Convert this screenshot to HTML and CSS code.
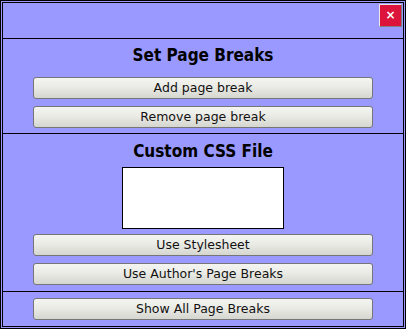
FILE: index.html
```html
<!DOCTYPE html>
<html>
<head>
<meta charset="utf-8">
<link rel="stylesheet" href="styles.css">
</head>
<body>
<div class="frame">
  <div class="panel">
    <div class="header">
      <button class="close" type="button">×</button>
    </div>
    <div class="section s1">
      <h2 class="title">Set Page Breaks</h2>
      <button class="btn first" type="button">Add page break</button>
      <button class="btn" type="button">Remove page break</button>
    </div>
    <div class="section s2">
      <h2 class="title">Custom CSS File</h2>
      <div class="cssbox"></div>
      <button class="btn first" type="button">Use Stylesheet</button>
      <button class="btn" type="button">Use Author's Page Breaks</button>
    </div>
    <div class="section s3">
      <button class="btn first" type="button">Show All Page Breaks</button>
    </div>
  </div>
</div>
</body>
</html>
```
FILE: styles.css
```css
html, body {
  margin: 0;
  padding: 0;
  background: #9999ff;
}
.frame {
  width: 406px;
  height: 329px;
  box-sizing: border-box;
  border: 1px solid #000;
  padding: 1px;
  background: #9999ff;
}
.panel {
  height: 100%;
  box-sizing: border-box;
  border: 1px solid #000;
  display: flex;
  flex-direction: column;
}
.header {
  flex-shrink: 0;
  height: 36px;
  border-bottom: 1px solid #000;
  display: flex;
  justify-content: flex-end;
  align-items: flex-start;
  padding: 1px 1px 0 0;
  box-sizing: border-box;
}
.close {
  width: 23px;
  height: 23px;
  margin: 0;
  padding: 0;
  background: #dc143c;
  color: #fff;
  border: 1px solid;
  border-color: #e8e8e8 #808080 #808080 #e8e8e8;
  font: bold 12px "DejaVu Sans", sans-serif;
  line-height: 19px;
}
.section {
  flex-shrink: 0;
  display: flex;
  flex-direction: column;
  align-items: center;
  border-bottom: 1px solid #000;
}
.s1 {
  padding: 6px 0 5px;
}
.s2 {
  padding: 7px 0 6px;
}
.s3 {
  border-bottom: none;
  padding: 6px 0 0;
}
.title {
  margin: 0;
  font: bold 17px/20px "DejaVu Sans Condensed", "DejaVu Sans", sans-serif;
  color: #000;
}
.s1 .title {
  margin-bottom: 12px;
}
.s2 .title {
  margin-bottom: 6px;
}
.cssbox {
  width: 162px;
  height: 62px;
  box-sizing: border-box;
  background: #fff;
  border: 1px solid #000;
  margin-bottom: 5px;
}
.btn {
  width: 340px;
  height: 22px;
  margin: 7px 0 0;
  padding: 0;
  box-sizing: border-box;
  border: 1px solid #767676;
  border-radius: 3px;
  background: linear-gradient(#f4f4f1, #ebebe6 45%, #d6d6d0);
  font: 12.5px/20px "DejaVu Sans", sans-serif;
  color: #111;
}
.btn.first {
  margin-top: 0;
}
```
